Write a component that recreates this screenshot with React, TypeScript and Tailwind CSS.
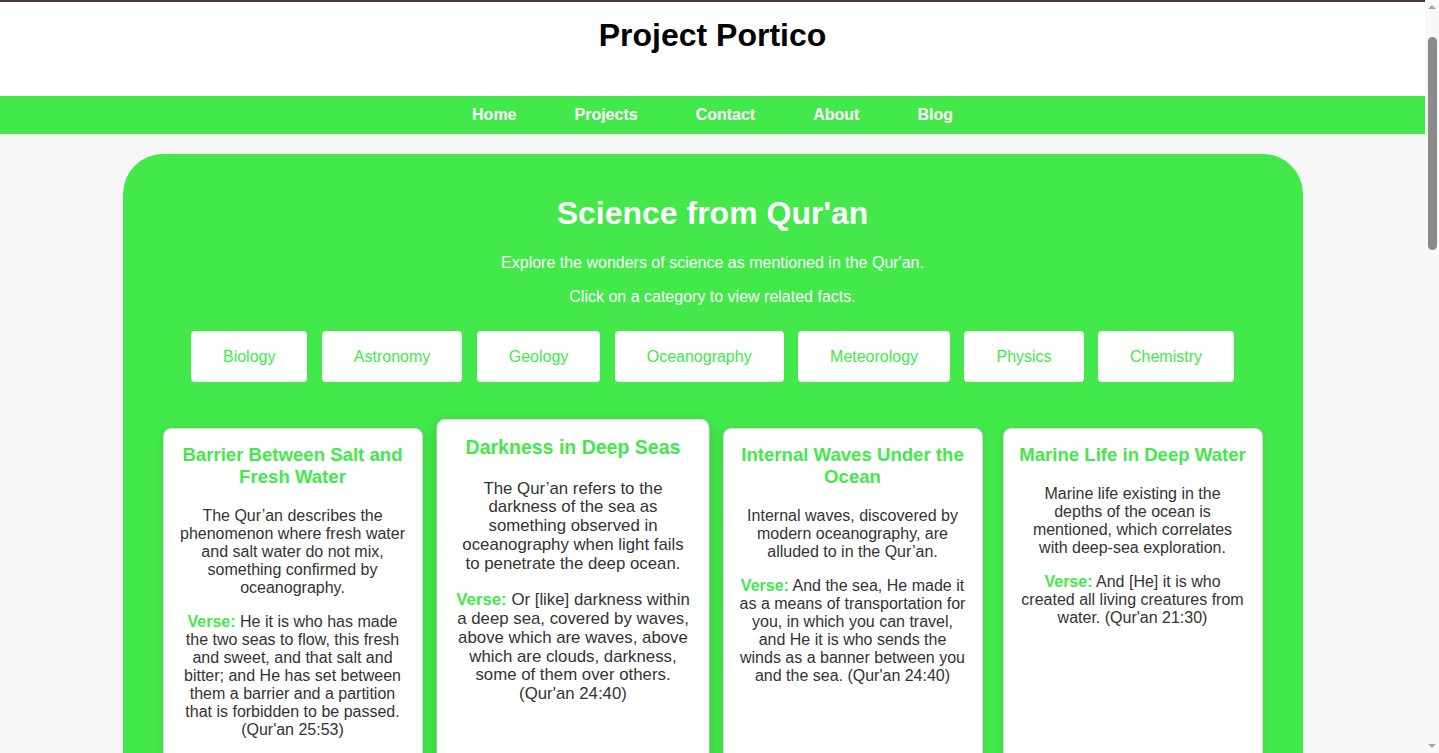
import React from "react";

type Fact = {
  title: string;
  text: string;
  verse: string;
};

const categories = [
  "Biology",
  "Astronomy",
  "Geology",
  "Oceanography",
  "Meteorology",
  "Physics",
  "Chemistry",
];

const facts: Fact[] = [
  {
    title: "Barrier Between Salt and Fresh Water",
    text: "The Qur\u2019an describes the phenomenon where fresh water and salt water do not mix, something confirmed by oceanography.",
    verse:
      "He it is who has made the two seas to flow, this fresh and sweet, and that salt and bitter; and He has set between them a barrier and a partition that is forbidden to be passed. (Qur'an 25:53)",
  },
  {
    title: "Darkness in Deep Seas",
    text: "The Qur\u2019an refers to the darkness of the sea as something observed in oceanography when light fails to penetrate the deep ocean.",
    verse:
      "Or [like] darkness within a deep sea, covered by waves, above which are waves, above which are clouds, darkness, some of them over others. (Qur'an 24:40)",
  },
  {
    title: "Internal Waves Under the Ocean",
    text: "Internal waves, discovered by modern oceanography, are alluded to in the Qur\u2019an.",
    verse:
      "And the sea, He made it as a means of transportation for you, in which you can travel, and He it is who sends the winds as a banner between you and the sea. (Qur'an 24:40)",
  },
  {
    title: "Marine Life in Deep Water",
    text: "Marine life existing in the depths of the ocean is mentioned, which correlates with deep-sea exploration.",
    verse: "And [He] it is who created all living creatures from water. (Qur'an 21:30)",
  },
  {
    title: "Ships Sailing on the Sea",
    text: "The movement of ships on the sea is described as a sign, consistent with the physics of buoyancy.",
    verse: "And of His signs are the ships in the sea, like mountains. (Qur'an 42:32)",
  },
  {
    title: "Fresh Food from the Sea",
    text: "The sea is described as a source of fresh food and ornaments such as pearls and coral.",
    verse:
      "And it is He who subjected the sea for you to eat from it tender meat and to extract from it ornaments which you wear. (Qur'an 16:14)",
  },
  {
    title: "Waves Upon Waves",
    text: "Layers of waves at the surface and below are described, matching modern observations of the ocean.",
    verse: "Covered by waves, above which are waves, above which are clouds. (Qur'an 24:40)",
  },
  {
    title: "The Seas Set on Fire",
    text: "Volcanic activity under the ocean floor has been found where the seas appear to burn.",
    verse: "And by the sea filled [with fire]. (Qur'an 52:6)",
  },
  {
    title: "Water Cycle",
    text: "The cycle of evaporation, cloud formation and rain is described in several verses.",
    verse:
      "And We send down from the sky water in measure and lodge it in the earth. (Qur'an 23:18)",
  },
  {
    title: "Rivers Meeting the Sea",
    text: "Estuaries where rivers meet the sea keep their distinct properties, as mentioned in the Qur\u2019an.",
    verse:
      "And it is He who has released the two seas, one fresh and sweet and one salty and bitter. (Qur'an 25:53)",
  },
  {
    title: "Pearls and Coral",
    text: "Pearls and coral coming out of both fresh and salt water are described.",
    verse: "From both of them emerge pearl and coral. (Qur'an 55:22)",
  },
  {
    title: "Depth of the Ocean",
    text: "The vast depths of the ocean are referred to long before they could be explored.",
    verse: "Or [like] darkness within a deep sea. (Qur'an 24:40)",
  },
];

function FactCard({ fact, hovered }: { fact: Fact; hovered?: boolean }) {
  return (
    <div
      className={
        hovered
          ? "min-h-[620px] origin-top -translate-y-[9px] scale-105 rounded-lg border border-[#dcdcdc] bg-white p-[15px] text-center shadow-[0_6px_14px_rgba(0,0,0,0.18)]"
          : "min-h-[620px] rounded-lg border border-[#dcdcdc] bg-white p-[15px] text-center shadow-[0_2px_6px_rgba(0,0,0,0.1)]"
      }
    >
      <h3 className="text-[18.6px] leading-[22px] font-bold text-[#43e84b]">
        {fact.title}
      </h3>
      <p className="mt-[19px] text-base leading-[18px] text-[#333]">{fact.text}</p>
      <p className="mt-4 text-base leading-[18px] text-[#333]">
        <span className="font-bold text-[#43e84b]">Verse:</span> {fact.verse}
      </p>
    </div>
  );
}

// fake classic scrollbar, the page was captured with one showing
function Scrollbar() {
  return (
    <div className="fixed top-0 right-0 bottom-0 flex w-[14px] flex-col items-center bg-[#f8f8f8]">
      <div className="mt-[5px] h-0 w-0 border-x-[4px] border-b-[4px] border-x-transparent border-b-[#a3a3a3]" />
      <div className="mt-[28px] h-[213px] w-[9px] rounded-full bg-[#8b8b8b]" />
      <div className="mt-auto mb-[5px] h-0 w-0 border-x-[4px] border-t-[4px] border-x-transparent border-t-[#a3a3a3]" />
    </div>
  );
}

export default function App() {
  return (
    <div className="min-h-screen bg-[#f7f7f7] font-['Liberation_Sans',Arial,sans-serif]">
      <div className="mr-[14px]">
        <div className="h-[2px] bg-[#4a3847]" />
        <header className="h-[94px] bg-white pt-[15px] text-center">
          <h1 className="text-[32px] leading-[37px] font-bold text-black">
            Project Portico
          </h1>
        </header>
        <nav className="flex h-[38px] items-center justify-center gap-[58px] bg-[#43e84b]">
          {["Home", "Projects", "Contact", "About", "Blog"].map((l) => (
            <a key={l} href="#" className="text-base font-bold text-white">
              {l}
            </a>
          ))}
        </nav>

        <main className="mx-auto mt-5 mb-5 max-w-[1180px] rounded-[40px] bg-[#43e84b] px-10 pt-[41px] pb-10">
          <h2 className="text-center text-[32px] leading-[37px] font-bold text-white">
            Science from Qur'an
          </h2>
          <p className="mt-[22px] text-center text-base leading-[18px] text-white">
            Explore the wonders of science as mentioned in the Qur'an.
          </p>
          <p className="mt-4 text-center text-base leading-[18px] text-white">
            Click on a category to view related facts.
          </p>

          <div className="mt-[25px] flex justify-center gap-[14.4px]">
            {categories.map((c) => (
              <button
                key={c}
                className="h-[51px] rounded bg-white px-8 text-base text-[#43e84b]"
              >
                {c}
              </button>
            ))}
          </div>

          <div className="mt-[46px] grid grid-cols-4 gap-5">
            {facts.map((f, i) => (
              <FactCard key={f.title} fact={f} hovered={i === 1} />
            ))}
          </div>
        </main>

        <footer className="h-[60px] bg-[#43e84b] text-center text-sm leading-[60px] text-white">
          © 2024 Project Portico
        </footer>
      </div>
      <Scrollbar />
    </div>
  );
}
